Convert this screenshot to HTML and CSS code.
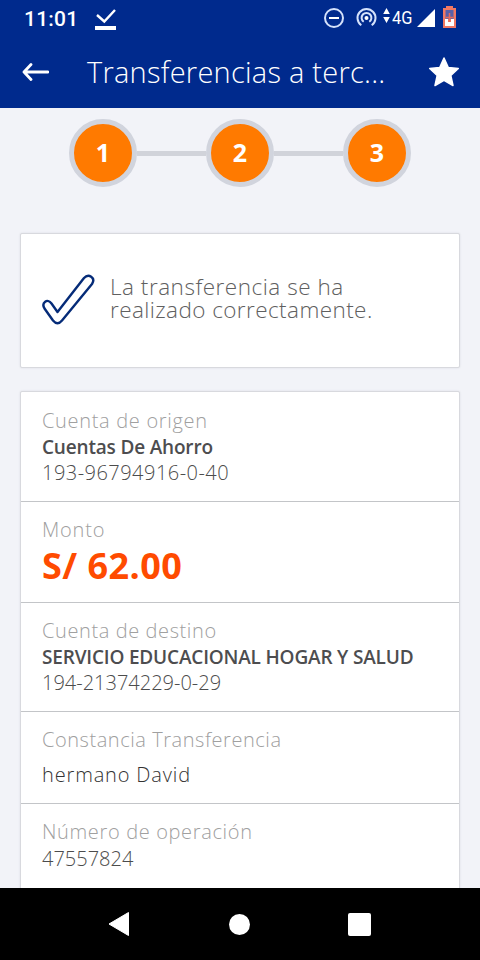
FILE: index.html
```
<!DOCTYPE html>
<html lang="es">
<head>
<meta charset="utf-8">
<title>Transferencias a terceros</title>
<link rel="stylesheet" href="styles.css">
</head>
<body>
<div class="screen">
  <header class="header">
    <div class="status">
      <span class="clock">11:01</span>
      <svg class="download" width="22" height="22" viewBox="0 0 22 22"><path d="M2 6l7.300 6.500L20 1" fill="none" stroke="#fff" stroke-width="2.400"/><path d="M0 17h21v4H0z" fill="#fff"/></svg>
      <svg class="tray" width="140" height="28" viewBox="320 4 140 28">
        <g fill="none" stroke="#d5e2fb" stroke-width="2">
          <circle cx="334" cy="18" r="9"/><path d="M329 18h10" stroke="#fff"/>
          <path d="M361.300 25.300a9 9 0 1 1 10.400 0"/><path d="M363.700 21.800a4.900 4.900 0 1 1 5.600 0"/>
        </g>
        <circle cx="366.500" cy="18" r="2" fill="#fff"/>
        <path d="M386.500 8l3.300 6h-6.600zM386.500 23l3.300-6h-6.600zM417 27l18-18v18z" fill="#fff"/>
        <path d="M446 6h7v2h3v20h-13V8h3z" fill="#f07863"/>
        <path d="M445.500 10h8v9h-8z" fill="#5960a8"/><path d="M445 19h3v3h3v-3h3v7h-9z" fill="#fff"/><path d="M449.500 13v9M446 17.500h7" stroke="#e56b5c" stroke-width="1.500"/>
      </svg>
      <span class="network">4G</span>
    </div>
    <div class="titlebar">
      <svg class="back" width="28" height="20" viewBox="0 0 28 20"><path d="M10 2.500L3 10l7 7.500M3 10h24" fill="none" stroke="#fff" stroke-width="2.800" stroke-linecap="round" stroke-linejoin="round"/></svg>
      <h1 class="title">Transferencias a terc...</h1>
      <svg class="star" width="32" height="32" viewBox="0 0 32 32"><path d="M16 2l4.300 9.500 10 1-7.500 7 2.200 10-9-5.200L7 29.500l2.200-10-7.500-7 10-1z" fill="#fff" stroke="#fff" stroke-width="1.500" stroke-linejoin="round"/></svg>
    </div>
  </header>
  <main class="content">
    <div class="steps">
      <span class="step">1</span><i class="line"></i><span class="step">2</span><i class="line"></i><span class="step">3</span>
    </div>
    <section class="card result">
      <svg class="check" width="54" height="54" viewBox="0 0 54 54"><path d="M15.500 40L42 6C46.500 1 54 5.500 50 12L20 48.500Q15.500 54 11 48.500L2.500 36.500C-1 30.500 5.500 26 9.500 31.500z" fill="#fff" stroke="#052b78" stroke-width="2.400" stroke-linejoin="round"/></svg>
      <p class="message"><span class="m1">La transferencia se ha</span><br><span class="m2">realizado correctamente.</span></p>
    </section>
    <section class="card details">
      <div class="row"><div class="label l1">Cuenta de origen</div><div class="name">Cuentas De Ahorro</div><div class="value v1">193-96794916-0-40</div></div>
      <div class="row"><div class="label l2">Monto</div><div class="amount">S/ 62.00</div></div>
      <div class="row"><div class="label l3">Cuenta de destino</div><div class="name">SERVICIO EDUCACIONAL HOGAR Y SALUD</div><div class="value">194-21374229-0-29</div></div>
      <div class="row"><div class="label l4">Constancia Transferencia</div><div class="value note">hermano David</div></div>
      <div class="row"><div class="label l5">Número de operación</div><div class="value last">47557824</div></div>
    </section>
  </main>
  <nav class="nav">
    <svg width="22" height="26" viewBox="0 0 22 26"><path d="M2 13L21.500 1.500v23z" fill="#fff" stroke="#fff" stroke-linejoin="round"/></svg>
    <span class="home"></span>
    <span class="recent"></span>
  </nav>
</div>
</body>
</html>
```
FILE: styles.css
```
* { box-sizing: border-box; }
body { margin: 0; font-family: "Open Sans", "Noto Sans", sans-serif; }
svg { display: block; flex: none; }
.screen { width: 480px; height: 960px; display: flex; flex-direction: column; overflow: hidden; background: #f2f3f8; }
.header { height: 108px; flex: none; background: #002a8d; color: #fff; }
.status { position: relative; display: flex; height: 36px; padding-left: 24px; }
.clock { width: 71px; font: 500 21px/38px Roboto, sans-serif; letter-spacing: .2px; }
.download { margin-top: 9px; }
.tray { margin: 4px 0 0 203px; }
.network { position: absolute; left: 392px; top: 6px; font: 400 18px/24px Roboto, sans-serif; transform: scaleX(.91); transform-origin: left; }
.titlebar { display: flex; align-items: center; height: 72px; padding-left: 21px; }
.title { width: 341px; margin: 0 0 0 38px; font-size: 29px; line-height: 40px; font-weight: 300; letter-spacing: .25px; white-space: nowrap; }
.content { height: 780px; flex: none; padding: 0 20px; overflow: hidden; }
.steps { display: flex; align-items: center; justify-content: center; padding-top: 11px; }
.step { width: 68px; height: 68px; border: 5px solid #d1d4dd; border-radius: 50%; background: #ff7a00; color: #fff; font-size: 25px; line-height: 57px; font-weight: 700; text-align: center; }
.line { width: 69px; height: 5px; background: #d1d3da; }
.card { background: #fff; border: 1px solid #d8d9de; border-radius: 2px; box-shadow: 0 0 2px #d9dae0; }
.result { display: flex; align-items: center; height: 135px; margin-top: 46px; padding-left: 21px; }
.check { margin-top: -4px; }
.message { margin: -5px 0 0 14px; color: #606060; font-size: 22.5px; line-height: 23px; font-weight: 300; white-space: nowrap; }
.m1 { letter-spacing: .52px; }
.m2 { letter-spacing: .42px; }
.details { height: 520px; margin-top: 23px; }
.row { padding: 15px 21px; border-bottom: 1px solid #c3c5c8; white-space: nowrap; }
.row:first-child { padding-top: 16px; }
.row:last-child { border: 0; }
.label, .name, .value { height: 26px; line-height: 26px; font-size: 20px; }
.label { color: #a0a0a0; font-weight: 300; }
.name { color: #4d4d4f; font-size: 19px; font-weight: 600; letter-spacing: -.18px; }
.value { color: #4c4c4c; font-weight: 300; }
.l1 { letter-spacing: .68px; }
.l2 { letter-spacing: .8px; }
.l3 { letter-spacing: .6px; }
.l4 { letter-spacing: .55px; }
.l5 { letter-spacing: .65px; }
.v1 { letter-spacing: .47px; }
.amount { height: 44px; line-height: 45px; color: #ff4b00; font-size: 36px; font-weight: 700; letter-spacing: .45px; }
.note { height: 35px; line-height: 44px; color: #333; letter-spacing: .85px; }
.last { line-height: 28px; }
.nav { display: flex; align-items: center; height: 72px; flex: none; background: #000; padding-left: 107px; }
.home { width: 21px; height: 21px; margin-left: 100px; border-radius: 50%; background: #fff; }
.recent { width: 23px; height: 23px; margin-left: 98px; border-radius: 2px; background: #fff; }
```
